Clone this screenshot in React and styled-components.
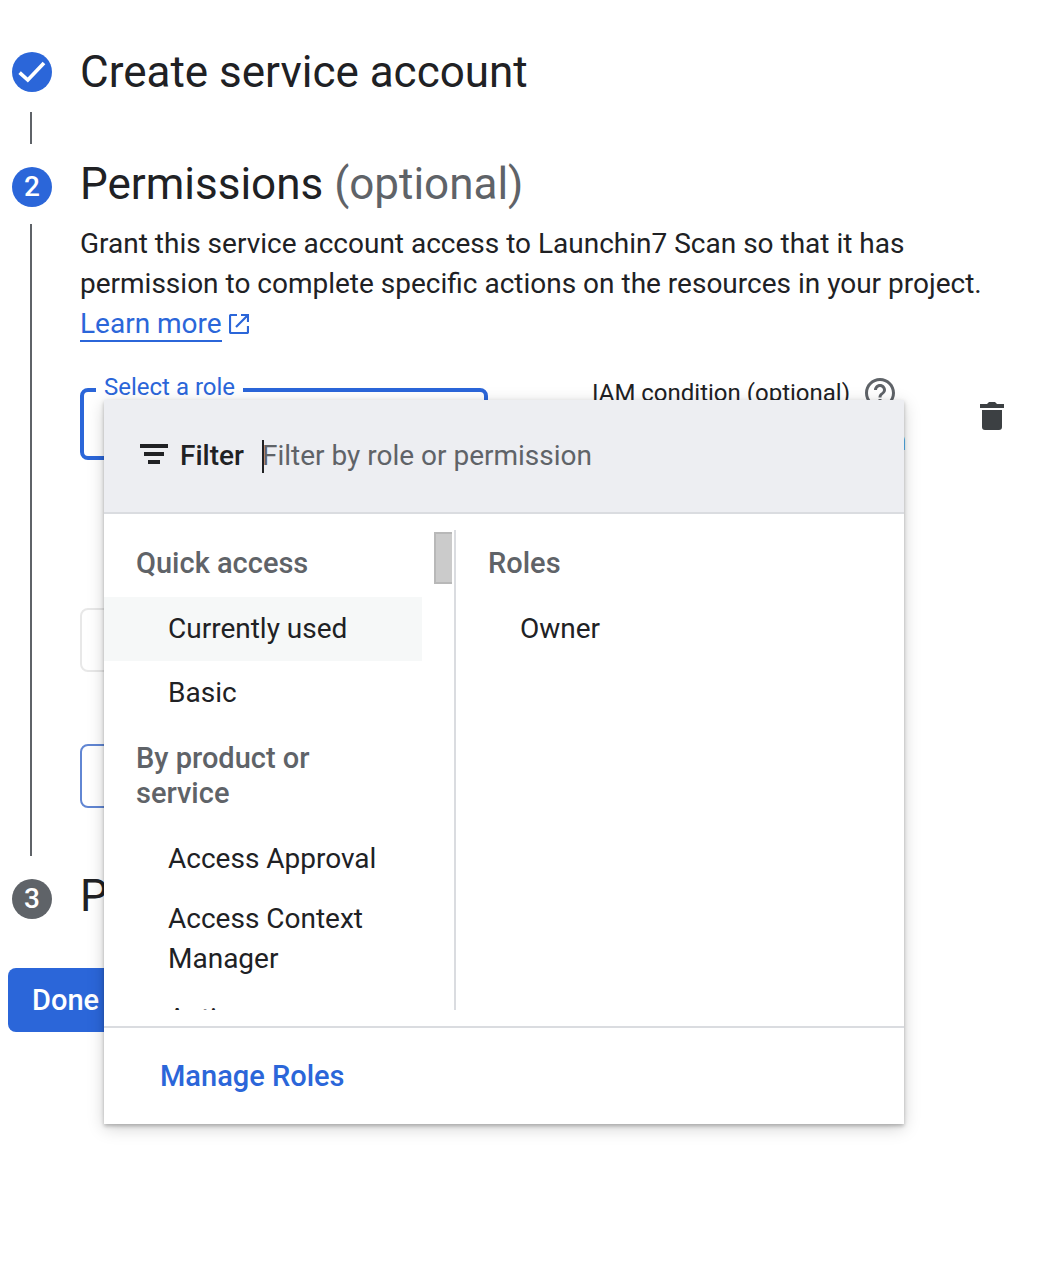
import React from "react";
import styled, { createGlobalStyle } from "styled-components";

const blue = "#2b66d9";
const ink = "#202124";
const grey = "#5f6368";
const rule = "#dadce0";

const GlobalStyle = createGlobalStyle`
  *, *::before, *::after { box-sizing: border-box; }
  body {
    margin: 0;
    background: #fff;
    color: ${ink};
    font: 400 28px/40px Roboto, "Liberation Sans", sans-serif;
  }
  button, input, select { font: inherit; color: inherit; }
`;

const Page = styled.main`
  padding: 44px 24px 120px 8px;
`;

const Steps = styled.ol`
  list-style: none;
  margin: 0 0 44px;
  padding: 0 0 0 4px;
`;

const Step = styled.li`
  display: grid;
  grid-template-columns: 40px minmax(0, 1fr);
  column-gap: 28px;
  padding-bottom: ${(p) => (p.$last ? 0 : 12)}px;
`;

const Rail = styled.div`
  display: flex;
  flex-direction: column;
`;

const MarkerSlot = styled.div`
  height: ${(p) => (p.$last ? 56 : 68)}px;
  padding-top: ${(p) => (p.$done ? 8 : 11)}px;
`;

const Marker = styled.span`
  display: flex;
  align-items: center;
  justify-content: center;
  width: 40px;
  height: 40px;
  border-radius: 50%;
  background: ${(p) => (p.$active ? blue : grey)};
  color: #fff;
  font-weight: 500;
`;

const Line = styled.span`
  flex: 1;
  width: 2px;
  min-height: 32px;
  margin-left: 18px;
  background: ${grey};
`;

const Title = styled.h2`
  margin: 0;
  font-size: 44px;
  line-height: 56px;
  font-weight: 400;
`;

const Muted = styled.span`
  color: ${grey};
`;

const Intro = styled.p`
  margin: 12px 0 44px;
`;

const LearnMore = styled.a`
  color: ${blue};
  text-decoration: none;

  span {
    display: inline-block;
    height: 38px;
    border-bottom: 2px solid ${blue};
  }

  svg {
    margin-left: 7px;
    vertical-align: -1px;
  }
`;

const RoleRow = styled.div`
  position: relative;
  display: grid;
  grid-template-columns: 408px minmax(0, 1fr) 48px;
  grid-template-rows: 72px;
  column-gap: 61px;
  margin-bottom: 148px;
`;

const Field = styled.div`
  position: relative;
  height: 72px;
`;

const FieldLabel = styled.label`
  position: absolute;
  top: -16px;
  left: 16px;
  padding: 0 8px;
  background: #fff;
  color: ${blue};
  font-size: 24px;
  line-height: 30px;
`;

const RoleSelect = styled.select`
  width: 100%;
  height: 100%;
  border: 4px solid ${blue};
  border-radius: 8px;
  background: #fff;
  appearance: none;
  outline: none;
`;

const Condition = styled.div`
  display: flex;
  flex-direction: column;
  width: 314px;
  margin-left: 43px;
`;

const ConditionHead = styled.div`
  display: flex;
  align-items: center;
  gap: 12px;
  height: 9px;
  font-size: 24px;
  white-space: nowrap;

  svg { flex: none; }
`;

const TextButton = styled.button`
  height: 64px;
  padding: 0;
  border: 0;
  background: none;
  color: ${blue};
  font-size: 29px;
  font-weight: 500;
`;

const ConditionButton = styled(TextButton)`
  align-self: flex-end;
  flex: none;
  margin-top: 12px;
  font-size: 28px;
`;

const IconButton = styled.button`
  grid-column: 3;
  grid-row: 1;
  display: flex;
  align-items: center;
  justify-content: center;
  width: 48px;
  height: 56px;
  padding: 0;
  border: 0;
  background: none;
`;

const Actions = styled.div`
  display: flex;
  flex-direction: column;
  align-items: flex-start;
  gap: 72px;
  padding-bottom: 48px;
`;

const OutlineButton = styled.button`
  height: 64px;
  padding: 0 30px;
  border: 2px solid ${(p) => (p.disabled ? "#e8e8e8" : "#6186d3")};
  border-radius: 8px;
  background: #fff;
  color: ${(p) => (p.disabled ? "#9aa0a6" : blue)};
  font-weight: 500;
`;

const PrimaryButton = styled.button`
  height: 64px;
  padding: 0 24px;
  border: 0;
  border-radius: 8px;
  background: ${blue};
  color: #fff;
  font-size: 29px;
  font-weight: 500;
`;

const Popup = styled.div`
  position: absolute;
  z-index: 1;
  top: 12px;
  left: 24px;
  right: 112px;
  background: #fff;
  box-shadow: 0 2px 4px rgba(0, 0, 0, 0.26), 0 4px 16px rgba(0, 0, 0, 0.18);
`;

const FilterBar = styled.div`
  display: flex;
  align-items: center;
  height: 114px;
  padding: 0 36px;
  border-bottom: 2px solid ${rule};
  background: #edeef2;
`;

const FilterLabel = styled.label`
  display: flex;
  align-items: center;
  gap: 12px;
  margin-right: 18px;
  font-weight: 500;
`;

const FilterBox = styled.div`
  position: relative;
  flex: 1;

  &::before {
    content: "";
    position: absolute;
    top: 4px;
    left: 0;
    width: 2px;
    height: 33px;
    background: ${ink};
  }
`;

const FilterInput = styled.input`
  display: block;
  width: 100%;
  height: 40px;
  padding: 0;
  border: 0;
  outline: none;
  background: none;

  &::placeholder { color: ${grey}; opacity: 1; }
`;

const Columns = styled.div`
  display: grid;
  grid-template-columns: 352px minmax(0, 1fr);
  padding: 16px 0;
  height: 512px;
`;

const Categories = styled.div`
  display: grid;
  grid-template-columns: minmax(0, 1fr) 20px;
  column-gap: 12px;
  height: 480px;
  overflow: hidden;
  border-right: 2px solid ${rule};
`;

const Track = styled.div`
  padding-top: 2px;
`;

const Thumb = styled.div`
  width: 18px;
  height: 52px;
  border: 2px solid #b8b8b8;
  border-right: 0;
  background: #cbcbcb;
`;

const GroupTitle = styled.h3`
  margin: 0;
  padding: 16px 32px;
  color: ${grey};
  font-size: 29px;
  line-height: 35px;
  font-weight: 500;
`;

const Options = styled.ul`
  list-style: none;
  margin: 0;
  padding: 0;
`;

const Option = styled.button`
  display: block;
  width: 100%;
  min-height: 64px;
  padding: 8px 32px 8px 64px;
  border: 0;
  background: ${(p) => (p.$current ? "#f6f8f8" : "transparent")};
  text-align: left;
`;

const Footer = styled.div`
  display: flex;
  align-items: center;
  height: 98px;
  padding: 0 56px;
  border-top: 2px solid ${rule};
`;

const CheckIcon = () => (
  <svg width="40" height="40" viewBox="0 0 40 40" fill="none" stroke="#fff" strokeWidth="3.7" aria-hidden="true">
    <path d="M7.6 20.6 15.8 28 32 11" />
  </svg>
);

const ExternalIcon = () => (
  <svg width="20" height="20" viewBox="0 0 20 20" fill="none" stroke={blue} strokeWidth="2.2" aria-hidden="true">
    <path d="M8 1H2.2Q1 1 1 2.2V17.8Q1 19 2.2 19H17.8Q19 19 19 17.8V12M12 1H19V8M18.5 1.5 7 13" />
  </svg>
);

const HelpIcon = () => (
  <svg width="36" height="36" viewBox="0 0 24 24" fill={grey} aria-hidden="true">
    <path d="M11 18h2v-2h-2v2zm1-16C6.48 2 2 6.48 2 12s4.48 10 10 10 10-4.48 10-10S17.52 2 12 2zm0 18c-4.41 0-8-3.59-8-8s3.59-8 8-8 8 3.59 8 8-3.59 8-8 8zm0-14c-2.21 0-4 1.79-4 4h2c0-1.1.9-2 2-2s2 .9 2 2c0 2-3 1.75-3 5h2c0-2.25 3-2.5 3-5 0-2.21-1.79-4-4-4z" />
  </svg>
);

const TrashIcon = () => (
  <svg width="24" height="28" viewBox="0 0 24 28" fill="#3c4043" aria-hidden="true">
    <path d="M0 2H7L9 0H15L17 2H24V6H0ZM2 8H22V25Q22 28 19 28H5Q2 28 2 25Z" />
  </svg>
);

const FilterIcon = () => (
  <svg width="28" height="24" viewBox="0 0 28 24" fill={ink} aria-hidden="true">
    <path d="M0 0H28V4H0ZM4 8H24V12H4ZM8 16H20V20H8Z" />
  </svg>
);

const groups = [
  { title: "Quick access", items: ["Currently used", "Basic"] },
  {
    title: "By product or service",
    items: ["Access Approval", "Access Context Manager", "Actions"],
  },
];

function RoleGroup({ title, items, current }) {
  return (
    <section>
      <GroupTitle>{title}</GroupTitle>
      <Options>
        {items.map((item) => (
          <li key={item}>
            <Option type="button" $current={item === current}>{item}</Option>
          </li>
        ))}
      </Options>
    </section>
  );
}

function RolePopup() {
  return (
    <Popup role="dialog" aria-label="Select a role">
      <FilterBar>
        <FilterLabel htmlFor="role-filter"><FilterIcon />Filter</FilterLabel>
        <FilterBox>
          <FilterInput id="role-filter" placeholder="Filter by role or permission" />
        </FilterBox>
      </FilterBar>
      <Columns>
        <Categories>
          <div>
            {groups.map((g) => (
              <RoleGroup key={g.title} {...g} current="Currently used" />
            ))}
          </div>
          <Track><Thumb /></Track>
        </Categories>
        <RoleGroup title="Roles" items={["Owner"]} />
      </Columns>
      <Footer><TextButton type="button">Manage Roles</TextButton></Footer>
    </Popup>
  );
}

export default function App() {
  return (
    <>
      <GlobalStyle />
      <Page>
        <Steps>
          <Step>
            <Rail>
              <MarkerSlot $done><Marker $active><CheckIcon /></Marker></MarkerSlot>
              <Line />
            </Rail>
            <Title>Create service account</Title>
          </Step>
          <Step>
            <Rail>
              <MarkerSlot><Marker $active>2</Marker></MarkerSlot>
              <Line />
            </Rail>
            <div>
              <Title>Permissions <Muted>(optional)</Muted></Title>
              <Intro>
                Grant this service account access to Launchin7 Scan so that it has
                permission to complete specific actions on the resources in your project.{" "}
                <LearnMore href="#learn-more"><span>Learn more</span><ExternalIcon /></LearnMore>
              </Intro>
              <RoleRow>
                <Field>
                  <RoleSelect id="role" />
                  <FieldLabel htmlFor="role">Select a role</FieldLabel>
                </Field>
                <Condition>
                  <ConditionHead>IAM condition (optional)<HelpIcon /></ConditionHead>
                  <ConditionButton type="button">Add IAM condition</ConditionButton>
                </Condition>
                <IconButton type="button" aria-label="Delete role"><TrashIcon /></IconButton>
                <RolePopup />
              </RoleRow>
              <Actions>
                <OutlineButton type="button" disabled>Add another role</OutlineButton>
                <OutlineButton type="button">Continue</OutlineButton>
              </Actions>
            </div>
          </Step>
          <Step $last>
            <Rail>
              <MarkerSlot $last><Marker>3</Marker></MarkerSlot>
            </Rail>
            <Title>Principals with access <Muted>(optional)</Muted></Title>
          </Step>
        </Steps>
        <PrimaryButton type="button">Done</PrimaryButton>
      </Page>
    </>
  );
}
